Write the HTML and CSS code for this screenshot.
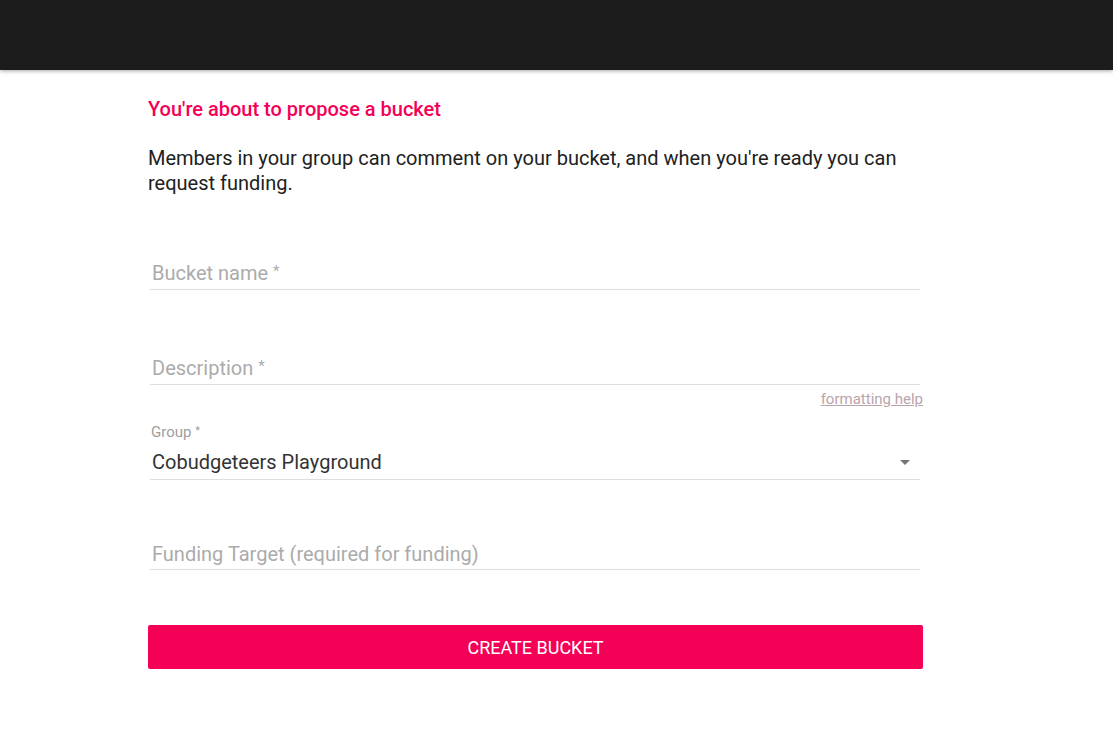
FILE: index.html
```html
<!DOCTYPE html>
<html lang="en">
<head>
<meta charset="utf-8">
<title>Propose a bucket</title>
<link rel="stylesheet" href="styles.css">
</head>
<body>
<header class="topbar"></header>
<main class="page">
  <h1 class="title">You're about to propose a bucket</h1>
  <p class="intro">Members in your group can comment on your bucket, and when you're ready you can request funding.</p>
  <form class="form">
    <div class="field field-name">
      <div class="input placeholder">Bucket name <span class="req">*</span></div>
    </div>
    <div class="field field-desc">
      <div class="input placeholder">Description <span class="req">*</span></div>
    </div>
    <div class="help-row"><a class="help" href="#">formatting help</a></div>
    <div class="field field-group">
      <div class="small-label">Group <span class="req-small">*</span></div>
      <div class="input select">
        <span class="value">Cobudgeteers Playground</span>
        <svg class="caret" width="10" height="5" viewBox="0 0 10 5"><path d="M0 0 L10 0 L5 5 Z" fill="#757575"/></svg>
      </div>
    </div>
    <div class="field field-target">
      <div class="input placeholder target-input">Funding Target (required for funding)</div>
    </div>
    <button type="button" class="submit">CREATE BUCKET</button>
  </form>
</main>
</body>
</html>
```
FILE: styles.css
```css
html, body {
  margin: 0;
  padding: 0;
  background: #ffffff;
  font-family: Roboto, "Liberation Sans", Arial, sans-serif;
}
.topbar {
  height: 70px;
  background: #1c1c1c;
  box-shadow: 0 1px 4px rgba(0,0,0,0.35);
}
.page {
  width: 775px;
  margin-left: 148px;
}
.title {
  margin: 27px 0 0 0;
  font-size: 20px;
  line-height: 24px;
  font-weight: 500;
  color: #f50057;
}
.intro {
  margin: 25px 0 0 0;
  font-size: 20px;
  line-height: 25px;
  color: #212121;
}
.form {
  display: flex;
  flex-direction: column;
}
.field {
  margin: 0 3px 0 2px;
}
.input {
  font-size: 20px;
  line-height: 24px;
  padding: 0 2px 4px 2px;
  border-bottom: 1px solid #dedede;
}
.placeholder {
  color: #ababab;
}
.req {
  font-size: 15px;
  vertical-align: 4px;
}
.field-name { margin-top: 63px; }
.field-desc { margin-top: 64px; }
.help-row {
  display: flex;
  justify-content: flex-end;
  margin-top: 6px;
  line-height: 16px;
}
.help {
  font-size: 15px;
  color: #b9a4ac;
  text-decoration: underline;
}
.field-group { margin-top: 16px; }
.small-label {
  font-size: 15px;
  line-height: 16px;
  color: #9e9e9e;
  padding-left: 1px;
}
.req-small {
  font-size: 11px;
  vertical-align: 3px;
}
.select {
  margin-top: 10px;
  padding-bottom: 5px;
  display: flex;
  align-items: center;
  justify-content: space-between;
  color: #333333;
}
.caret {
  margin-right: 8px;
}
.field-target { margin-top: 62px; }
.target-input { padding-bottom: 3px; }
.submit {
  margin-top: 55px;
  height: 44px;
  width: 775px;
  border: none;
  border-radius: 2px;
  background: #f50057;
  color: #ffffff;
  font-family: Roboto, "Liberation Sans", Arial, sans-serif;
  font-size: 18px;
  font-weight: 400;
  padding: 0;
}
```
